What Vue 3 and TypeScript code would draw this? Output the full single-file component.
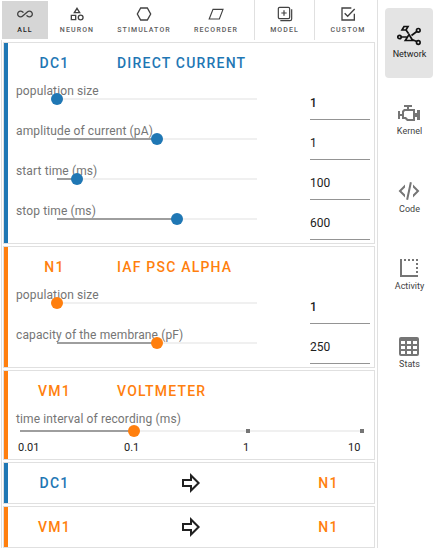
<script setup lang="ts">
interface Param { label: string; value: string; pos: number; strong?: boolean }
interface NodeCard { id: string; title: string; tone: string; params: Param[] }
interface Tool { key: string; label: string }

const tools: Tool[] = [
  { key: 'all', label: 'All' },
  { key: 'neuron', label: 'Neuron' },
  { key: 'stimulator', label: 'Stimulator' },
  { key: 'recorder', label: 'Recorder' },
  { key: 'model', label: 'Model' },
  { key: 'custom', label: 'Custom' },
]

const nodes: NodeCard[] = [
  {
    id: 'DC1', title: 'Direct current', tone: 'blue',
    params: [
      { label: 'population size', value: '1', pos: 0, strong: true },
      { label: 'amplitude of current (pA)', value: '1', pos: 50 },
      { label: 'start time (ms)', value: '100', pos: 10 },
      { label: 'stop time (ms)', value: '600', pos: 60 },
    ],
  },
  {
    id: 'N1', title: 'IAF PSC alpha', tone: 'orange',
    params: [
      { label: 'population size', value: '1', pos: 0, strong: true },
      { label: 'capacity of the membrane (pF)', value: '250', pos: 50 },
    ],
  },
]

const connections = [
  { source: 'DC1', target: 'N1', tone: 'blue' },
  { source: 'VM1', target: 'N1', tone: 'orange' },
]

const views = ['Network', 'Kernel', 'Code', 'Activity', 'Stats']
const active = 'Network'
</script>

<template>
  <div class="app">
    <main class="panel">
      <nav class="toolbar">
        <button v-for="t in tools" :key="t.key" class="tool" :class="[t.key, { selected: t.key === 'all' }]">
          <svg class="tool-icon" viewBox="0 0 24 24" fill="none" stroke="currentColor" stroke-width="2">
            <path v-if="t.key === 'all'" fill="currentColor" stroke="none" d="M18.6 6.62c-1.44 0-2.8.56-3.77 1.53L7.8 14.39c-.64.64-1.49.99-2.4.99-1.87 0-3.39-1.51-3.39-3.38S3.53 8.62 5.4 8.62c.91 0 1.76.35 2.44 1.03l1.13 1 1.51-1.34L9.22 8.2C8.2 7.18 6.84 6.62 5.4 6.62 2.42 6.62 0 9.04 0 12s2.42 5.38 5.4 5.38c1.44 0 2.8-.56 3.77-1.53l7.03-6.24c.64-.64 1.49-.99 2.4-.99 1.87 0 3.39 1.51 3.39 3.38s-1.52 3.38-3.39 3.38c-.9 0-1.76-.35-2.44-1.03l-1.14-1.01-1.51 1.34 1.27 1.12c1.02 1.01 2.37 1.57 3.82 1.57 2.98 0 5.4-2.41 5.4-5.38s-2.42-5.37-5.4-5.37z" />
            <g v-else-if="t.key === 'neuron'">
              <path d="M12 3.500 16 10H8zM3.500 14h6.500v6.500H3.500z" />
              <circle cx="17.500" cy="17.300" r="3.600" />
            </g>
            <path v-else-if="t.key === 'stimulator'" d="M7 3h10l5 9-5 9H7l-5-9z" />
            <path v-else-if="t.key === 'recorder'" stroke-width="1.700" d="M7.500 5h15L17 19.500H1.800z" />
            <g v-else-if="t.key === 'model'" stroke-width="1.800">
              <rect x="2" y="2" width="17" height="17" rx="2" />
              <path d="M10.500 6.500v8M6.500 10.500h8M22 5v14.500a2.500 2.500 0 0 1-2.500 2.500H5" />
            </g>
            <path v-else d="M21.500 11.500V21H3V3h14M7 11l4.500 4.500L22 4.500" />
          </svg>
          <span class="tool-label">{{ t.label }}</span>
        </button>
      </nav>

      <div class="cards">
        <section v-for="n in nodes" :key="n.id" class="card" :class="n.tone">
          <header class="head">
            <span class="id">{{ n.id }}</span>
            <span class="title">{{ n.title }}</span>
          </header>
          <div v-for="p in n.params" :key="p.label" class="param">
            <div class="control">
              <label class="label">{{ p.label }}</label>
              <div class="slider">
                <div class="fill" :style="{ width: p.pos + '%' }"></div>
                <div class="knob" :style="{ left: p.pos + '%' }"></div>
              </div>
            </div>
            <span class="value" :class="{ strong: p.strong }">{{ p.value }}</span>
          </div>
        </section>

        <section class="card orange recorder-card">
          <header class="head">
            <span class="id">VM1</span>
            <span class="title">Voltmeter</span>
          </header>
          <div class="interval">
            <label class="label">time interval of recording (ms)</label>
            <div class="slider wide">
              <div class="fill" :style="{ width: '33.333%' }"></div>
              <div class="knob" :style="{ left: '33.333%' }"></div>
              <i class="tick two"></i>
              <i class="tick three"></i>
            </div>
            <div class="scale"><span>0.01</span><span>0.1</span><span>1</span><span>10</span></div>
          </div>
        </section>

        <section v-for="c in connections" :key="c.source" class="card connection" :class="c.tone">
          <span class="id">{{ c.source }}</span>
          <svg class="arrow" viewBox="0 0 20 20" fill="none" stroke="#212121" stroke-width="2">
            <path d="M2 7h8V2.500l7.600 7.500-7.600 7.500V13H2z" />
          </svg>
          <span class="id target orange">{{ c.target }}</span>
        </section>
      </div>
    </main>

    <aside class="views">
      <button v-for="v in views" :key="v" class="view" :class="{ active: v === active }">
        <svg class="view-icon" viewBox="0 0 24 24" fill="none" stroke="currentColor" stroke-width="2">
          <g v-if="v === 'Network'" stroke-width="1.700">
            <path d="M12 10.500 15.700 16.500H8.300zM4.300 13h5.500M14.500 11.500l5.300-4M15 15.500l4.700 2M11.500 9.500 9 6M5 6l2-3.500h4L9 6z" />
            <circle cx="2.500" cy="13" r="1.700" />
            <circle cx="21.300" cy="6.300" r="1.800" />
            <circle cx="21.300" cy="18.500" r="1.800" />
          </g>
          <path v-else-if="v === 'Kernel'" fill="currentColor" stroke="none" fill-rule="evenodd" d="M8 10h8v8h-5l-2-2H7v-5M7 4v2h3v2H7l-2 2v3H3v-3H1v8h2v-3h2v3h3l2 2h8v-4h2v3h3V9h-3v3h-2V8h-6V6h3V4H7z" />
          <path v-else-if="v === 'Code'" fill="currentColor" stroke="none" d="M12.890 3l1.960.4L11.110 21l-1.960-.4L12.890 3M19.590 12L16 8.410V5.580L22.420 12 16 18.410v-2.830L19.590 12M1.580 12L8 5.580v2.830L4.410 12 8 15.580v2.830L1.580 12z" />
          <g v-else-if="v === 'Activity'">
            <path d="M4 3v17h17" />
            <path d="M7 4h14M20 7v12" stroke-dasharray="2 2" />
          </g>
          <path v-else fill="currentColor" stroke="none" fill-rule="evenodd" d="M4 3h16a2 2 0 0 1 2 2v15a2 2 0 0 1-2 2H4a2 2 0 0 1-2-2V5a2 2 0 0 1 2-2zM4 7v3h4V7zM10 7v3h4V7zM16 7v3h4V7zM4 12v3h4v-3zM10 12v3h4v-3zM16 12v3h4v-3zM4 17v3h4v-3zM10 17v3h4v-3zM16 17v3h4v-3z" />
        </svg>
        <span>{{ v }}</span>
      </button>
    </aside>
  </div>
</template>

<style>
body { background: #fff; overflow: hidden; }
</style>

<style scoped>
.app { display: flex; width: 440px; height: 548px; font-family: Roboto, sans-serif; color: #212121; }
.app * { box-sizing: border-box; }
button { border: 0; padding: 0; background: none; font-family: inherit; color: inherit; }
.panel { width: 378px; border-right: 1px solid #e0e0e0; }
.toolbar { display: grid; grid-template-columns: 46px 58px 76px 72px 60px 65px; height: 40px; padding-left: 2px; }
.tool { display: flex; flex-direction: column; align-items: center; color: #5c5c5c; padding-top: 6px; }
.tool.selected { margin: 1px 0; padding-top: 5px; background: #d6d6d6; color: #212121; }
.tool.recorder { padding-right: 4px; }
.tool.model, .tool.custom { border-left: 1px solid #e0e0e0; }
.tool.custom { padding-left: 2px; }
.tool-icon { width: 16px; height: 16px; flex: none; color: #424242; }
.tool-label { margin-top: 3px; font-size: 7px; line-height: 11px; font-weight: 500; letter-spacing: 1.1px; text-transform: uppercase; }
.cards { display: flex; flex-direction: column; gap: 2px; margin-left: 1px; padding: 2px 2px 0 1px; border-left: 1px solid #e0e0e0; height: 508px; }
.card { flex: none; border: 1px solid #e0e0e0; padding: 0 0 3px 12px; }
.blue { --tone: #1f77b4; }
.orange { --tone: #ff7f0e; }
.card { box-shadow: inset 4px 0 0 var(--tone); }
.head { display: flex; align-items: center; height: 37px; padding-top: 2px; }
.id, .title { color: var(--tone); font-size: 14px; font-weight: 500; line-height: 20px; letter-spacing: 1.2px; text-transform: uppercase; }
.id { width: 77px; text-align: center; }
.title { margin-left: 24px; }
.param { display: flex; height: 40px; }
.control { width: 241px; }
.label { display: block; height: 18px; font-size: 12px; line-height: 23px; letter-spacing: 0.12px; color: #757575; white-space: nowrap; }
.slider { position: relative; height: 2px; margin-left: 41px; background: #f0f0f0; }
.fill { height: 2px; background: #9e9e9e; }
.knob { position: absolute; top: -5px; width: 12px; height: 12px; margin-left: -6px; border-radius: 50%; background: var(--tone); }
.value { width: 60px; margin-left: 53px; border-bottom: 1px solid #949494; font-size: 12px; line-height: 46px; height: 40px; }
.strong { font-weight: 500; }
.recorder-card { height: 90px; }
.interval { padding-top: 1px; }
.interval .label { height: 21px; line-height: 21px; }
.wide { width: 342px; margin-left: 4px; }
.tick { position: absolute; top: -1px; width: 4px; height: 4px; margin-left: -2px; background: #757575; }
.two { left: 66.667%; }
.three { left: 100%; }
.scale { display: grid; grid-template-columns: 106px 119px 105px 1fr; margin: 8px 0 0 2px; font-size: 11px; line-height: 16px; }
.connection { display: flex; align-items: center; height: 42px; padding-bottom: 0; }
.arrow { width: 20px; height: 20px; margin-left: 88px; }
.target { margin-left: 89px; }
.views { width: 62px; padding: 8px 0 0 7px; display: flex; flex-direction: column; gap: 7.600px; }
.view { display: flex; flex-direction: column; align-items: center; justify-content: center; flex: none; width: 48px; height: 70px; padding-bottom: 2px; border-radius: 4px; color: #424242; font-size: 9px; line-height: 13px; }
.view span { padding-left: 1px; }
.view.active { background: #e4e4e4; color: #212121; }
.view-icon { width: 24px; height: 24px; color: #757575; }
.active .view-icon { color: #111; }
</style>
